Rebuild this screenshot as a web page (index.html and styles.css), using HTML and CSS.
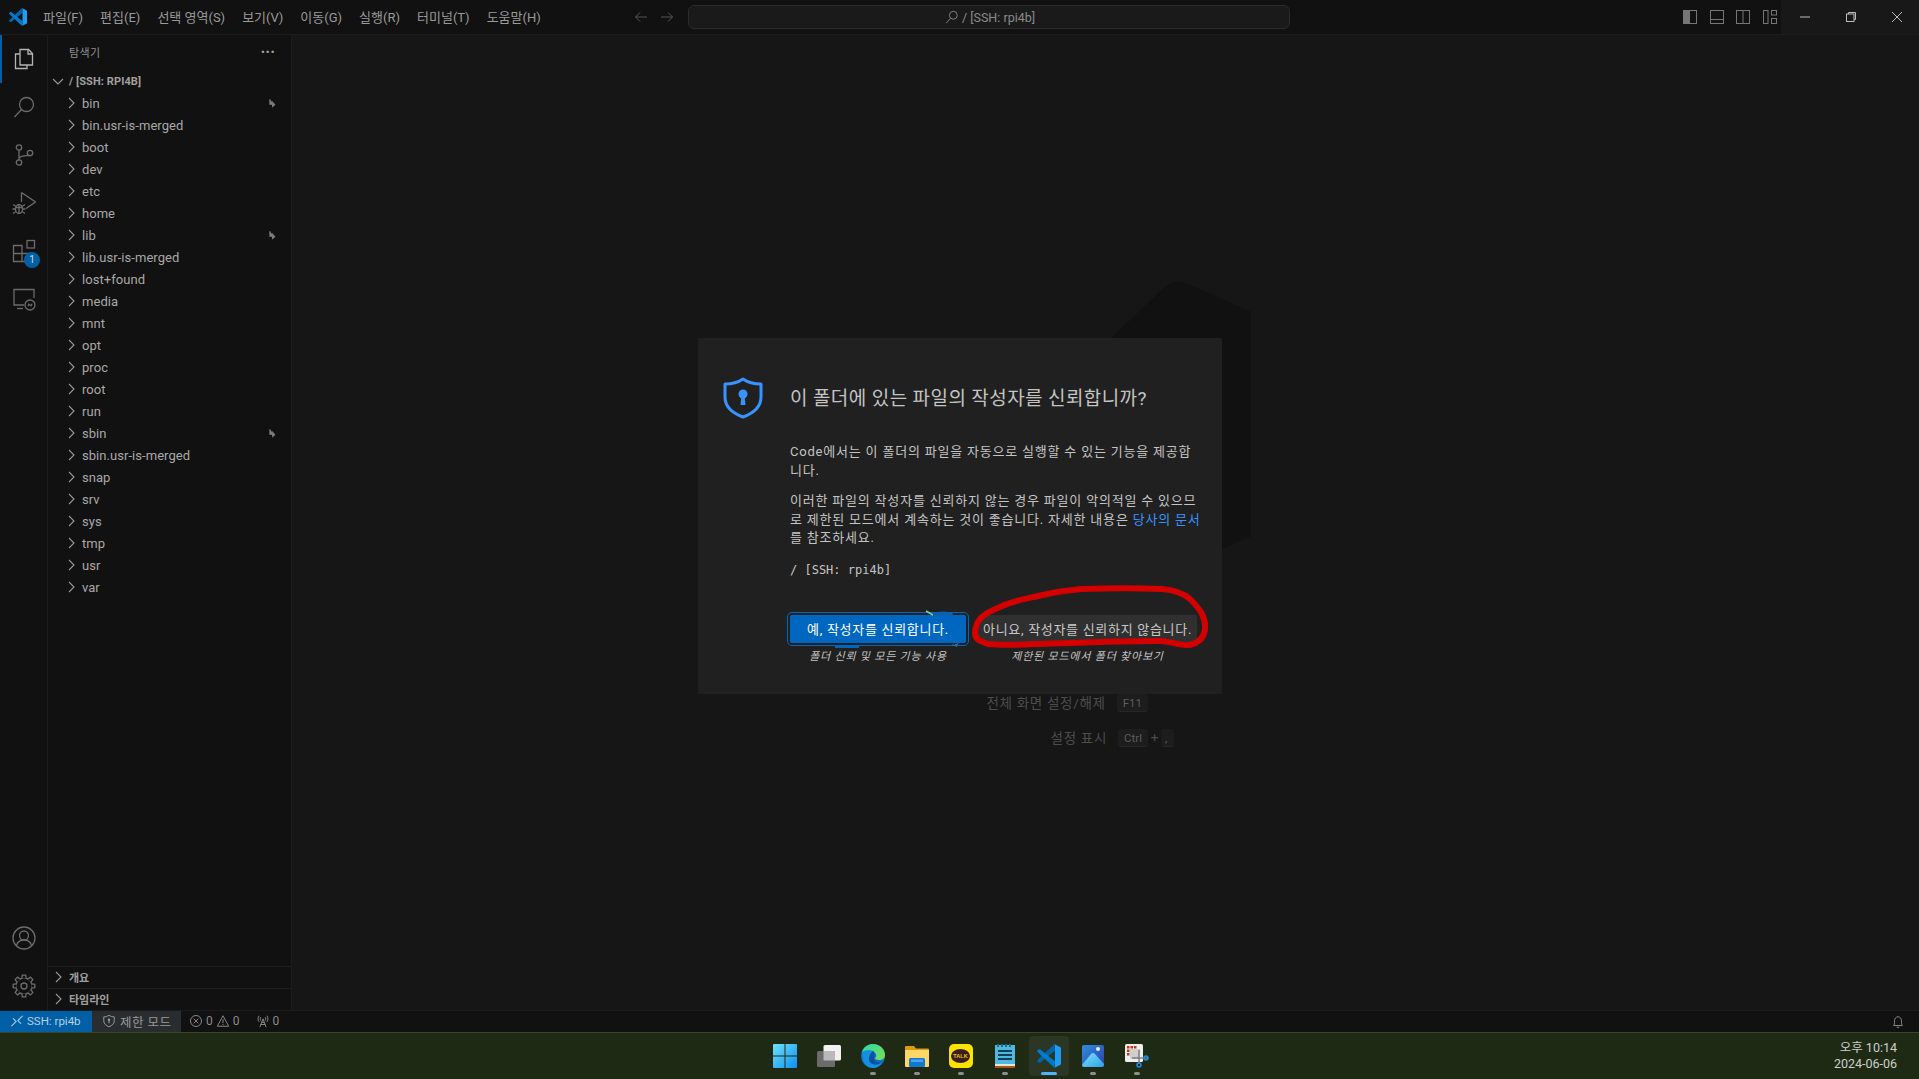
FILE: index.html
```html
<!DOCTYPE html>
<html lang="ko">
<head>
<meta charset="utf-8">
<title>VS Code</title>
<link rel="stylesheet" href="styles.css">
</head>
<body>
<svg class="defs" width="0" height="0" aria-hidden="true">
  <symbol id="chev-r" viewBox="0 0 16 16"><path d="M6 3l5 5-5 5" fill="none" stroke="currentColor" stroke-width="1.1"/></symbol>
  <symbol id="chev-d" viewBox="0 0 16 16"><path d="M3 6l5 5 5-5" fill="none" stroke="currentColor" stroke-width="1.1"/></symbol>
  <symbol id="link" viewBox="0 0 12 12"><path d="M3.5 1.5v6h4.5M6.8 5.2L9.2 8 6.8 10.2z" fill="currentColor" stroke="currentColor" stroke-width="1.3"/></symbol>
  <symbol id="vsc" viewBox="0 0 100 100">
    <path d="M71 2L76 27 14 77Q10 80 6 77L2 73Q-1 70 2 67Z" fill="#0065a9"/>
    <path d="M71 98L76 73 14 23Q10 20 6 23L2 27Q-1 30 2 33Z" fill="#007acc"/>
    <path d="M71 2Q73 1 75 2L96 12Q100 14 100 18V82Q100 86 96 88L75 98Q73 99 71 98Q75 96 75 90V10Q75 4 71 2Z" fill="#1f9cf0"/>
  </symbol>
</svg>

<div class="window">
  <header class="titlebar">
    <svg class="logo" viewBox="0 0 100 100"><use href="#vsc"/></svg>
    <nav class="menu">
      <span>파일(F)</span><span>편집(E)</span><span>선택 영역(S)</span><span>보기(V)</span><span>이동(G)</span><span>실행(R)</span><span>터미널(T)</span><span>도움말(H)</span>
    </nav>
    <div class="nav-arrows">
      <svg viewBox="0 0 16 16"><path d="M14 8H2.5M7 3.5L2.5 8 7 12.5" fill="none" stroke="currentColor"/></svg>
      <svg viewBox="0 0 16 16"><path d="M2 8h11.5M9 3.5L13.5 8 9 12.5" fill="none" stroke="currentColor"/></svg>
    </div>
    <div class="search">
      <svg viewBox="0 0 16 16"><circle cx="9.5" cy="6" r="4.5" fill="none" stroke="currentColor"/><path d="M6.3 9.4L1.5 15" stroke="currentColor" fill="none"/></svg>
      <span>/ [SSH: rpi4b]</span>
    </div>
    <div class="layout-icons">
      <svg viewBox="0 0 16 16"><rect x="1.5" y="1.5" width="13" height="13" fill="none" stroke="currentColor"/><rect x="1.5" y="1.5" width="6.5" height="13" fill="currentColor"/></svg>
      <svg viewBox="0 0 16 16"><rect x="1.5" y="1.5" width="13" height="13" fill="none" stroke="currentColor"/><path d="M1.5 10.5h13" stroke="currentColor"/></svg>
      <svg viewBox="0 0 16 16"><rect x="1.5" y="1.5" width="13" height="13" fill="none" stroke="currentColor"/><path d="M8 1.5v13" stroke="currentColor"/></svg>
      <svg viewBox="0 0 16 16"><rect x="1.5" y="1.5" width="4.5" height="13" fill="none" stroke="currentColor"/><rect x="9.5" y="1.5" width="5" height="4.5" fill="none" stroke="currentColor"/><rect x="9.5" y="9.5" width="5" height="5" fill="none" stroke="currentColor"/></svg>
    </div>
    <div class="win-controls">
      <span><svg viewBox="0 0 12 12"><path d="M1 6h10" stroke="currentColor"/></svg></span>
      <span><svg viewBox="0 0 12 12"><rect x="1.5" y="3" width="7.5" height="7.5" fill="none" stroke="currentColor"/><path d="M3.5 3V1.5h7V8.500H9" fill="none" stroke="currentColor"/></svg></span>
      <span><svg viewBox="0 0 12 12"><path d="M1 1l10 10M11 1L1 11" stroke="currentColor"/></svg></span>
    </div>
  </header>

  <div class="main">
    <aside class="activity">
      <div class="act-top">
        <div class="act-item active"><svg viewBox="0 0 24 24" fill="none" stroke="currentColor" stroke-width="1.3"><path d="M8 2.500h8.500l4 4v11.500h-12.500z"/><path d="M16 2.500v4.500h4.500"/><path d="M8 7H3.500v14.500H15V18"/></svg></div>
        <div class="act-item"><svg viewBox="0 0 24 24" fill="none" stroke="currentColor" stroke-width="1.3"><circle cx="14.500" cy="9.500" r="7"/><path d="M9.500 14.500L2.500 22"/></svg></div>
        <div class="act-item"><svg viewBox="0 0 24 24" fill="none" stroke="currentColor" stroke-width="1.3"><circle cx="7" cy="4.500" r="2.700"/><circle cx="7" cy="19.500" r="2.700"/><circle cx="18" cy="10" r="2.700"/><path d="M7 7.200v9.600M7 15.500c1-2.500 3-2.500 6-2.700 2-.2 3.500-.5 5-.2"/></svg></div>
        <div class="act-item"><svg viewBox="0 0 24 24" fill="none" stroke="currentColor" stroke-width="1.3"><path d="M9.500 1.500L23.500 11 14 17.500M9.500 1.500v9.500"/><ellipse cx="7" cy="18" rx="3.500" ry="4.500"/><path d="M3.500 16.500h7M7 13.500v9M1 13.500l3 2M13 13.500l-3 2M.500 18h3M10.500 18h3M1 22.500l3-2M13 22.500l-3-2"/></svg></div>
        <div class="act-item act-ext"><svg viewBox="0 0 24 24" fill="none" stroke="currentColor" stroke-width="1.3"><rect x="15" y="1.500" width="7.500" height="7.500"/><path d="M1.500 6.500h8.500v16H1.500zM1.500 14.500h16.500v8H10"/></svg><span class="badge">1</span></div>
        <div class="act-item"><svg viewBox="0 0 24 24" fill="none" stroke="currentColor" stroke-width="1.3"><path d="M12 18H2V2.500h20V11"/><path d="M5 21.500h6"/><circle cx="18" cy="18" r="5"/><path d="M15.800 19l1.500-1.200-1-1M20.200 17l-1.500 1.200 1 1"/></svg></div>
      </div>
      <div class="act-bottom">
        <div class="act-item"><svg viewBox="0 0 24 24" fill="none" stroke="currentColor" stroke-width="1.3"><circle cx="12" cy="12" r="11"/><circle cx="12" cy="9.500" r="4.500"/><path d="M4.500 19.500c1-3.500 3.500-5.500 7.500-5.500s6.500 2 7.500 5.500"/></svg></div>
        <div class="act-item"><svg viewBox="0 0 24 24" fill="none" stroke="currentColor" stroke-width="1.3">
          <circle cx="12" cy="12" r="8"/>
          <g fill="#111"><path d="M9.800 4.500L10.300 1.200h3.400L14.200 4.500"/><path d="M9.800 4.500L10.300 1.200h3.400L14.200 4.500" transform="rotate(45 12 12)"/><path d="M9.800 4.500L10.300 1.200h3.400L14.200 4.500" transform="rotate(90 12 12)"/><path d="M9.800 4.500L10.300 1.200h3.400L14.200 4.500" transform="rotate(135 12 12)"/><path d="M9.800 4.500L10.300 1.200h3.400L14.200 4.500" transform="rotate(180 12 12)"/><path d="M9.800 4.500L10.300 1.200h3.400L14.200 4.500" transform="rotate(225 12 12)"/><path d="M9.800 4.500L10.300 1.200h3.400L14.200 4.500" transform="rotate(270 12 12)"/><path d="M9.800 4.500L10.300 1.200h3.400L14.200 4.500" transform="rotate(315 12 12)"/></g>
          <circle cx="12" cy="12" r="3"/></svg></div>
      </div>
    </aside>

    <aside class="sidebar">
      <div class="side-title"><span>탐색기</span><span class="dots">···</span></div>
      <div class="root-row"><svg class="chev"><use href="#chev-d"/></svg><span>/ [SSH: RPI4B]</span></div>
      <ul class="tree">
        <li><svg class="chev"><use href="#chev-r"/></svg><span class="name">bin</span><svg class="lnk"><use href="#link"/></svg></li>
        <li><svg class="chev"><use href="#chev-r"/></svg><span class="name">bin.usr-is-merged</span></li>
        <li><svg class="chev"><use href="#chev-r"/></svg><span class="name">boot</span></li>
        <li><svg class="chev"><use href="#chev-r"/></svg><span class="name">dev</span></li>
        <li><svg class="chev"><use href="#chev-r"/></svg><span class="name">etc</span></li>
        <li><svg class="chev"><use href="#chev-r"/></svg><span class="name">home</span></li>
        <li><svg class="chev"><use href="#chev-r"/></svg><span class="name">lib</span><svg class="lnk"><use href="#link"/></svg></li>
        <li><svg class="chev"><use href="#chev-r"/></svg><span class="name">lib.usr-is-merged</span></li>
        <li><svg class="chev"><use href="#chev-r"/></svg><span class="name">lost+found</span></li>
        <li><svg class="chev"><use href="#chev-r"/></svg><span class="name">media</span></li>
        <li><svg class="chev"><use href="#chev-r"/></svg><span class="name">mnt</span></li>
        <li><svg class="chev"><use href="#chev-r"/></svg><span class="name">opt</span></li>
        <li><svg class="chev"><use href="#chev-r"/></svg><span class="name">proc</span></li>
        <li><svg class="chev"><use href="#chev-r"/></svg><span class="name">root</span></li>
        <li><svg class="chev"><use href="#chev-r"/></svg><span class="name">run</span></li>
        <li><svg class="chev"><use href="#chev-r"/></svg><span class="name">sbin</span><svg class="lnk"><use href="#link"/></svg></li>
        <li><svg class="chev"><use href="#chev-r"/></svg><span class="name">sbin.usr-is-merged</span></li>
        <li><svg class="chev"><use href="#chev-r"/></svg><span class="name">snap</span></li>
        <li><svg class="chev"><use href="#chev-r"/></svg><span class="name">srv</span></li>
        <li><svg class="chev"><use href="#chev-r"/></svg><span class="name">sys</span></li>
        <li><svg class="chev"><use href="#chev-r"/></svg><span class="name">tmp</span></li>
        <li><svg class="chev"><use href="#chev-r"/></svg><span class="name">usr</span></li>
        <li><svg class="chev"><use href="#chev-r"/></svg><span class="name">var</span></li>
      </ul>
      <div class="side-sections">
        <div class="section"><svg class="chev"><use href="#chev-r"/></svg><span>개요</span></div>
        <div class="section"><svg class="chev"><use href="#chev-r"/></svg><span>타임라인</span></div>
      </div>
    </aside>

    <main class="editor">
      <div class="hints">
        <div class="hint"><span class="hint-label">전체 화면 설정/해제</span><span class="kbd">F11</span><span class="plus"></span><span class="kbd-spacer"></span></div>
        <div class="hint"><span class="hint-label">설정 표시</span><span class="kbd">Ctrl</span><span class="plus">+</span><span class="kbd kbd-narrow">,</span></div>
      </div>
    </main>
  </div>

  <footer class="statusbar">
    <div class="st-remote">
      <svg viewBox="0 0 16 16" fill="none" stroke="currentColor" stroke-width="1.2"><path d="M1.500 14L7 8.500 3.500 5M14.500 2L9 7.500l3.500 3.500"/></svg>
      <span>SSH: rpi4b</span>
    </div>
    <div class="st-restricted">
      <svg viewBox="0 0 16 16"><path d="M8 1.500c2 1.300 3.800 1.700 6 1.800v4.500c0 3.300-2.500 5.500-6 6.800-3.500-1.300-6-3.500-6-6.800V3.300c2.200-.1 4-.5 6-1.800z" fill="none" stroke="currentColor" stroke-width="1.100"/><circle cx="8" cy="6.500" r="1.400" fill="currentColor"/><path d="M7.400 7h1.200v3.500H7.400z" fill="currentColor"/></svg>
      <span>제한 모드</span>
    </div>
    <div class="st-item st-problems">
      <svg viewBox="0 0 16 16" fill="none" stroke="currentColor" stroke-width="1.100"><circle cx="8" cy="8" r="6.300"/><path d="M5.300 5.300l5.400 5.400M10.700 5.300l-5.400 5.400"/></svg>
      <span>0</span>
      <svg viewBox="0 0 16 16" fill="none" stroke="currentColor" stroke-width="1.100"><path d="M8 2L14.500 14h-13zM8 6v4.500M8 11.500v1.200"/></svg>
      <span>0</span>
    </div>
    <div class="st-item st-ports">
      <svg viewBox="0 0 16 16" fill="none" stroke="currentColor" stroke-width="1.100"><path d="M8 5.500L4.500 15M8 5.500L11.500 15M5.500 12h5M6.500 9.500h3M3.500 2C2 4 2 7 3.500 9M12.500 2c1.500 2 1.500 5 0 7M5.500 3.500c-.8 1-.8 3 0 4M10.500 3.500c.8 1 .8 3 0 4"/></svg>
      <span>0</span>
    </div>
    <div class="st-bell">
      <svg viewBox="0 0 16 16" fill="none" stroke="currentColor" stroke-width="1.100"><path d="M3 12c1-1 1-2 1-5.500C4 4 5.800 2 8 2s4 2 4 4.500c0 3.500 0 4.500 1 5.500zM6.500 14h3"/></svg>
    </div>
  </footer>

  <div class="taskbar">
    <div class="tb-apps">
      <div class="tb-app">
        <svg viewBox="0 0 24 24"><defs><linearGradient id="win" x1="0" y1="0" x2="1" y2="1"><stop offset="0" stop-color="#6fe2fb"/><stop offset="1" stop-color="#0d8ff0"/></linearGradient></defs><path d="M0 1q0-1 1-1h10.500v11.500H0zM12.500 0H23q1 0 1 1v10.500H12.500zM0 12.500h11.500V24H1q-1 0-1-1zM12.500 12.500H24V23q0 1-1 1H12.500z" fill="url(#win)"/></svg>
      </div>
      <div class="tb-app">
        <svg viewBox="0 0 24 24"><rect x="6.500" y="1" width="17.500" height="15.500" rx="1.500" fill="#f1f1f1"/><rect x="0" y="7" width="18" height="16" rx="1.500" fill="#6b6b6b"/><rect x="6.500" y="7" width="11.500" height="9.500" fill="#b9b9b9"/></svg>
      </div>
      <div class="tb-app dot">
        <svg viewBox="0 0 24 24"><defs><linearGradient id="edge" x1="0" y1="0" x2="1" y2="1"><stop offset="0" stop-color="#2dd4b0"/><stop offset="1" stop-color="#7de04a"/></linearGradient></defs><circle cx="12" cy="12" r="12" fill="#0f6fc4"/><path d="M1 8C3 2 8 0 12 0c7 0 12 5 12 11 0 4-3 5-6 5-2 0-4-1-4-2 2-1 2-5-2-6-4-1-8 0-11 0z" fill="url(#edge)"/><path d="M1 8c3-2 8-3 11-1 3 2 1 5 1 7 0 4 5 5 8 4-2 4-6 6-9 6-5 0-9-4-10-8-.5-3-.5-5-1-8z" fill="#1590dc"/><path d="M12 7c3 2 1 5 1 7 0 4 5 5 8 4-3 3-9 4-12 0-2-3-1-8 3-11z" fill="#0a4fa3"/></svg>
      </div>
      <div class="tb-app dot">
        <svg viewBox="0 0 24 24"><path d="M0 3q0-1 1-1h8l2 2.500h12q1 0 1 1V8H0z" fill="#d99c12"/><path d="M0 6h24v16q0 1-1 1H1q-1 0-1-1z" fill="#fcd669"/><rect x="4" y="14" width="16" height="9" rx="1.500" fill="#1278cf"/><rect x="6" y="15.500" width="12" height="2.500" fill="#4aa6ea"/></svg>
      </div>
      <div class="tb-app dot">
        <div class="talk-icon"><span class="talk-bubble">TALK</span></div>
      </div>
      <div class="tb-app dot">
        <svg viewBox="0 0 24 24"><rect x="2" y="1" width="20" height="23" fill="#4fb8dc"/><rect x="2" y="20" width="20" height="2" fill="#e8e4d8"/><rect x="2" y="22" width="20" height="2" fill="#a8521c"/><g fill="#123f5e"><rect x="5" y="6" width="14" height="2"/><rect x="5" y="10" width="14" height="2"/><rect x="5" y="14" width="14" height="2"/></g><g fill="#1b6c8e"><rect x="4" y="0" width="2" height="3"/><rect x="8" y="0" width="2" height="3"/><rect x="12" y="0" width="2" height="3"/><rect x="16" y="0" width="2" height="3"/></g></svg>
      </div>
      <div class="tb-app running">
        <svg viewBox="0 0 100 100"><use href="#vsc"/></svg>
      </div>
      <div class="tb-app dot">
        <svg viewBox="0 0 24 24"><defs><linearGradient id="ph" x1="0" y1="0" x2="1" y2="1"><stop offset="0" stop-color="#2f8ee0"/><stop offset="1" stop-color="#2b3ea8"/></linearGradient><linearGradient id="ph2" x1="0" y1="0" x2="1" y2="1"><stop offset="0" stop-color="#7fe0f7"/><stop offset="1" stop-color="#2fa0e8"/></linearGradient></defs><rect x="1" y="1" width="22" height="22" rx="2" fill="url(#ph)"/><path d="M1 21L10 10q2-2 4 0l9 10v1q0 2-2 2H3q-2 0-2-2z" fill="url(#ph2)"/><circle cx="17" cy="5" r="2" fill="#e4e9f7"/></svg>
      </div>
      <div class="tb-app dot">
        <svg viewBox="0 0 24 24"><rect x="0" y="0" width="18" height="18" rx="1.500" fill="#eee"/><g fill="#c8371c"><rect x="2" y="2" width="2.500" height="2.500"/><rect x="5.500" y="2" width="2.500" height="2.500"/><rect x="9" y="2" width="2.500" height="2.500"/><rect x="2" y="5.500" width="2.500" height="2.500"/><rect x="2" y="9" width="2.500" height="2.500"/></g><rect x="5" y="5" width="10" height="10" fill="#cfcfcf"/><path d="M14 6v14M7 14h16" stroke="#7d7d7d" stroke-width="1.500"/><circle cx="21" cy="14" r="2" fill="none" stroke="#1b8fe0" stroke-width="1.500"/><circle cx="14" cy="21" r="2" fill="none" stroke="#1b8fe0" stroke-width="1.500"/></svg>
      </div>
    </div>
    <div class="tb-clock"><div>오후 10:14</div><div>2024-06-06</div></div>
  </div>

  <svg class="watermark" viewBox="0 0 140 290"><path d="M0 57L54 6Q63-1 74 3L139 32V256L74 286 0 200z" fill="#111"/></svg>

  <section class="dialog">
    <div class="dlg-icon">
      <svg viewBox="0 0 40 42"><path d="M20 2c5 3.500 10 5 18 5v13c0 10-7 16-18 20C9 36 2 30 2 20V7c8 0 13-1.500 18-5z" fill="none" stroke="#3794ff" stroke-width="3" stroke-linejoin="round"/><circle cx="20" cy="17" r="4.500" fill="#3794ff"/><path d="M18.500 18h3l1 10h-5z" fill="#3794ff"/></svg>
    </div>
    <div class="dlg-body">
      <h1 class="dlg-title">이 폴더에 있는 파일의 작성자를 신뢰합니까?</h1>
      <p class="dlg-text">Code에서는 이 폴더의 파일을 자동으로 실행할 수 있는 기능을 제공합<br>니다.</p>
      <p class="dlg-text">이러한 파일의 작성자를 신뢰하지 않는 경우 파일이 악의적일 수 있으므<br>로 제한된 모드에서 계속하는 것이 좋습니다. 자세한 내용은 <a class="dlg-link">당사의 문서</a><br>를 참조하세요.</p>
      <p class="dlg-path">/ [SSH: rpi4b]</p>
      <div class="dlg-actions">
        <div class="dlg-action dlg-action-yes">
          <button class="btn btn-primary">예, 작성자를 신뢰합니다.</button>
          <span class="btn-sub">폴더 신뢰 및 모든 기능 사용</span>
        </div>
        <div class="dlg-action dlg-action-no">
          <button class="btn btn-secondary">아니요, 작성자를 신뢰하지 않습니다.</button>
          <span class="btn-sub">제한된 모드에서 폴더 찾아보기</span>
        </div>
      </div>
    </div>
  </section>

  <svg class="smudge" viewBox="0 0 140 40"><path d="M102 5Q114 2 122 5L124 8H106Z" fill="#0b62ac"/><path d="M96 3L103 7" stroke="#6fd8a0" stroke-width="1.600"/><path d="M127 36Q125 38 122 37M128 35L126 39" stroke="#1b7fc0" fill="none"/><rect x="5" y="38" width="24" height="2" fill="#0067c0"/></svg>
  <svg class="scribble" viewBox="0 0 250 80"><path d="M5 50C6 38 10 32 30 24 42 18 55 16 68 13 84 9 100 7 112 6 140 5 170 5 192 6 205 7 213 10 220 16 230 26 236 34 235 46 234 56 228 60 220 62 210 63 200 58 190 58 150 58 100 60 65 61 45 62 28 62 18 61 9 58 5 56 5 50Z" fill="none" stroke="#d40000" stroke-width="6" stroke-linejoin="round"/></svg>
</div>
</body>
</html>
```
FILE: styles.css
```css
* { box-sizing: border-box; }
html, body { margin: 0; padding: 0; height: 100%; overflow: hidden; background: #111; }
body { font-family: Roboto, "Noto Sans CJK KR", sans-serif; font-size: 13px; color: #a8a8a8; }
.defs { position: absolute; }
.window { position: relative; display: flex; flex-direction: column; width: 1919px; height: 1079px; }

/* title bar */
.titlebar { display: flex; align-items: center; height: 35px; padding-left: 9px; background: #111; border-bottom: 1px solid #1c1c1c; flex: none; }
.logo { width: 18px; height: 18px; flex: none; }
.menu { display: flex; gap: 17px; margin-left: 16px; padding-bottom: 2px; width: 499px; color: #9a9a9a; font-size: 13px; white-space: nowrap; }
.nav-arrows { display: flex; gap: 10px; margin-left: 90.500px; color: #555; }
.nav-arrows svg { width: 16px; height: 16px; }
.search { display: flex; align-items: center; justify-content: center; gap: 3px; width: 602px; height: 24px; margin-left: 13px; padding-left: 3px; background: #1a1a1a; border: 1px solid #2b2b2b; border-radius: 6px; color: #8a8a8a; font-size: 12.500px; }
.search svg { width: 14px; height: 14px; }
.layout-icons { display: flex; gap: 10.500px; margin-left: 392.500px; color: #767676; }
.layout-icons svg { width: 16px; height: 16px; }
.win-controls { display: flex; margin-left: auto; height: 34px; background: #181818; color: #bcbcbc; }
.win-controls span { display: flex; align-items: center; justify-content: center; width: 46px; padding-left: 1px; }
.win-controls svg { width: 12px; height: 12px; }

/* main */
.main { display: flex; flex: 1; min-height: 0; }
.activity { display: flex; flex-direction: column; justify-content: space-between; width: 48px; background: #111; border-right: 1px solid #1c1c1c; flex: none; color: #6c6c6c; }
.act-item { position: relative; display: flex; align-items: center; justify-content: center; width: 47px; height: 48px; }
.act-item svg { width: 24px; height: 24px; }
.act-item.active { color: #b4b4b4; border-left: 2px solid #005fa5; padding-right: 2px; }
.badge { position: absolute; left: 24px; top: 25px; width: 16px; height: 16px; border-radius: 50%; background: #005fa5; color: #d8d8d8; font-size: 10px; line-height: 16px; text-align: center; }

.sidebar { display: flex; flex-direction: column; width: 244px; background: #111; border-right: 1px solid #1c1c1c; flex: none; }
.side-title { display: flex; align-items: center; justify-content: space-between; height: 35px; padding: 0 16px 1px 21px; font-size: 11px; letter-spacing: .4px; color: #8f8f8f; }
.dots { font-size: 16px; font-weight: 700; letter-spacing: 0; line-height: 1; color: #a0a0a0; }
.root-row { display: flex; align-items: center; height: 22px; padding-left: 2px; font-size: 11px; font-weight: 700; color: #a0a0a0; }
.root-row span { margin-left: 1px; letter-spacing: .1px; }
.chev { width: 16px; height: 16px; flex: none; margin-right: 2px; color: #989898; }
.tree { list-style: none; margin: 0; padding: 0; flex: 1; }
.tree li { display: flex; align-items: center; height: 22px; padding-left: 15px; }
.name { flex: 1; margin-left: 1px; letter-spacing: .05px; }
.lnk { width: 10px; height: 10px; margin-right: 14px; color: #7c7c7c; }
.side-sections { flex: none; }
.section { display: flex; align-items: center; height: 22px; padding: 0 0 2px 2px; border-top: 1px solid #1e1e1e; font-size: 11px; font-weight: 700; color: #a0a0a0; }
.section span { margin-left: 1px; }

.editor { flex: 1; background: #161616; padding: 655px 0 0 0; }
.hints { display: flex; flex-direction: column; gap: 11px; width: 882px; color: #4c4c4c; }
.hint { display: flex; align-items: center; justify-content: flex-end; height: 24px; font-size: 13.500px; }
.hint-label { margin-right: 11px; letter-spacing: .7px; }
.kbd { display: inline-block; margin-top: 2px; padding: 0 6px; height: 18px; line-height: 18px; background: #1d1d1d; border-bottom: 1px solid #262626; border-radius: 3px; font-size: 11.500px; color: #5c5c5c; }
.kbd-narrow { width: 13px; padding: 0 4px; }
.plus { width: 13px; text-align: center; }
.kbd-spacer { width: 13px; }

/* status bar */
.statusbar { display: flex; align-items: center; height: 22px; background: #111; border-top: 1px solid #1c1c1c; flex: none; font-size: 12px; color: #8a8a8a; }
.statusbar svg { width: 14px; height: 14px; flex: none; }
.st-remote { display: flex; align-items: center; gap: 3px; height: 100%; width: 92px; padding: 0 0 1px 10px; background: #005fa5; color: #b8cfe0; font-size: 11.500px; }
.st-restricted { display: flex; align-items: center; gap: 4px; height: 100%; width: 89px; padding: 0 0 1px 10px; background: #2a2d30; color: #9a9a9a; font-size: 12.500px; letter-spacing: .5px; }
.st-problems { display: flex; align-items: center; gap: 3px; margin-left: 8px; padding-bottom: 1px; }
.st-ports { display: flex; align-items: center; gap: 3px; margin-left: 16px; padding-bottom: 1px; }
.st-bell { margin-left: auto; margin-right: 14px; display: flex; }

/* taskbar */
.taskbar { position: relative; display: flex; align-items: center; justify-content: center; height: 47px; flex: none; background: #1f2a14; border-top: 1px solid #3a4530; }
.tb-apps { display: flex; margin-left: 2px; }
.tb-app { position: relative; display: flex; align-items: center; justify-content: center; width: 44px; height: 40px; }
.tb-app svg { width: 24px; height: 24px; }
.tb-app.dot::after { content: ""; position: absolute; left: 19px; bottom: 1px; width: 6px; height: 3px; border-radius: 2px; background: #8e8e8e; }
.tb-app.running::before { content: ""; position: absolute; left: 2px; top: 0; width: 40px; height: 40px; border-radius: 4px; background: #2c3624; }
.tb-app.running svg { position: relative; }
.tb-app.running::after { content: ""; position: absolute; left: 14px; bottom: 1px; width: 16px; height: 3px; border-radius: 2px; background: #4cb4f5; }
.talk-icon { display: flex; align-items: center; justify-content: center; width: 24px; height: 24px; border-radius: 5px; background: #fbe300; }
.talk-bubble { display: block; width: 19px; height: 14px; border-radius: 50%; background: #3a1d1d; color: #e8c800; font-family: "Liberation Sans", sans-serif; font-size: 5.500px; font-weight: 700; line-height: 14px; text-align: center; }
.tb-clock { position: absolute; right: 22px; top: 7px; text-align: right; font-size: 12.500px; line-height: 16px; color: #cdd0c8; }

/* overlays */
.watermark { position: absolute; left: 1112px; top: 280px; width: 140px; height: 290px; }
.dialog { position: absolute; left: 698px; top: 338px; display: flex; width: 524px; height: 356px; background: #202020; color: #c4c4c4; }
.dlg-icon { width: 92px; padding: 39px 0 0 25px; flex: none; }
.dlg-icon svg { display: block; width: 40px; height: 42px; }
.dlg-body { flex: 1; padding-top: 47px; min-width: 0; }
.dlg-title { margin: 0; font-size: 19px; font-weight: 400; letter-spacing: .4px; line-height: 28px; white-space: nowrap; }
.dlg-text { margin: 0 0 12px; font-size: 13px; letter-spacing: .8px; line-height: 18.500px; white-space: nowrap; }
.dlg-title + .dlg-text { margin-top: 30px; }
.dlg-link { color: #3794ff; }
.dlg-path { margin: 0; padding-top: 1px; font-family: "DejaVu Sans Mono", monospace; font-size: 12px; line-height: 18px; }
.dlg-actions { display: flex; gap: 12px; margin-top: 36px; }
.dlg-action { display: flex; flex-direction: column; align-items: center; }
.dlg-action-yes { width: 176px; }
.dlg-action-no { width: 219px; }
.btn { display: block; width: 100%; height: 28px; border: none; padding: 0; font: inherit; font-size: 13px; letter-spacing: .7px; white-space: nowrap; }
.btn-primary { background: #0067c0; color: #fff; outline: 1px solid #0067c0; outline-offset: 2px; border-radius: 2px; }
.btn-secondary { background: #303030; color: #c8c8c8; border-radius: 2px; }
.btn-sub { margin-top: 6px; font-size: 11px; letter-spacing: .8px; line-height: 16px; font-style: italic; color: #c4c4c4; white-space: nowrap; }
.smudge { position: absolute; left: 830px; top: 608px; width: 140px; height: 40px; overflow: visible; }
.scribble { position: absolute; left: 970px; top: 583px; width: 250px; height: 80px; overflow: visible; }
```
